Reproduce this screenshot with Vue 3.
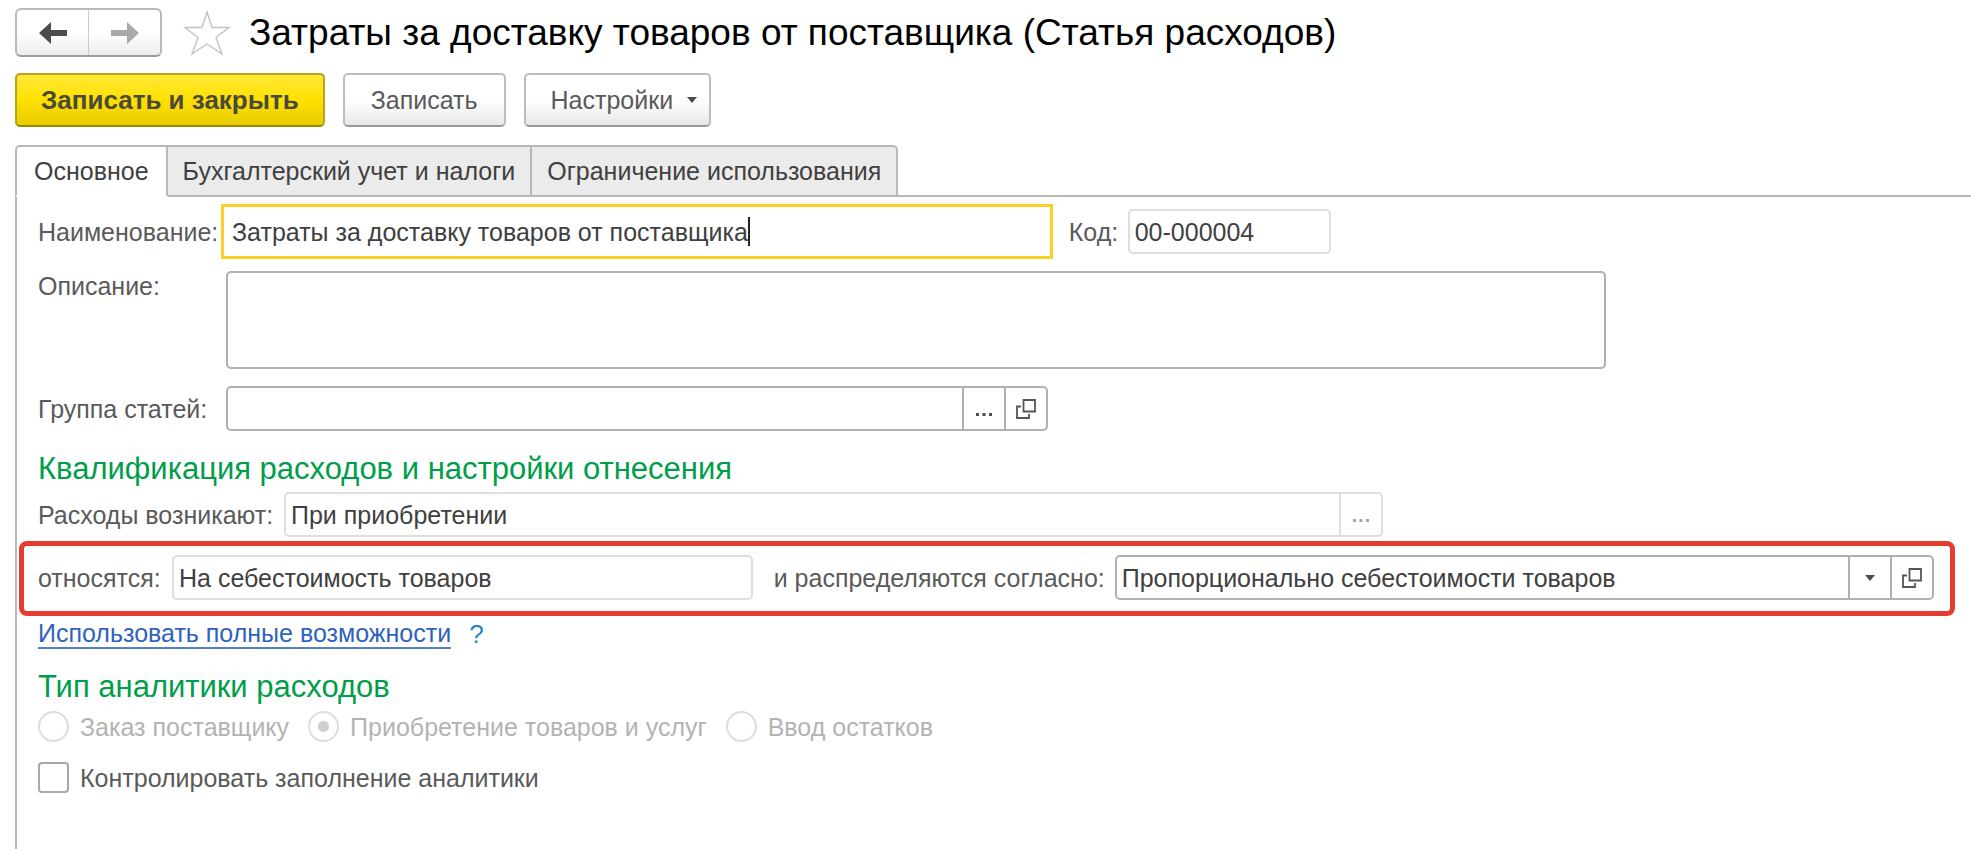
<template>
  <div class="page">
    <header class="header">
      <div class="nav">
        <button type="button" aria-label="Назад">
          <svg width="28" height="22" viewBox="0 0 28 22">
            <path d="M0 11 L12 0 V8 H28 V14 H12 V22 Z" fill="#4d4d4d" />
          </svg>
        </button>
        <button type="button" aria-label="Вперед">
          <svg width="28" height="22" viewBox="0 0 28 22">
            <path d="M28 11 L16 0 V8 H0 V14 H16 V22 Z" fill="#a9a9a9" />
          </svg>
        </button>
      </div>
      <button type="button" class="star" aria-label="В избранное">
        <svg width="48" height="46" viewBox="0 0 48 46">
          <path
            d="M24 2 L29 17.5 H46 L33 27.5 L39 44 L24 34 L9 44 L15 27.5 L2 17.5 H19 Z"
            fill="none"
            stroke="#bcc4cb"
            stroke-width="1.4"
          />
        </svg>
      </button>
      <h1>Затраты за доставку товаров от поставщика (Статья расходов)</h1>
    </header>

    <div class="commands">
      <button type="button" class="btn primary">Записать и закрыть</button>
      <button type="button" class="btn">Записать</button>
      <button type="button" class="btn menu">
        Настройки
        <svg width="10" height="6" viewBox="0 0 10 6">
          <path d="M0 0 H10 L5 6 Z" fill="#4d4d4d" />
        </svg>
      </button>
    </div>

    <div class="tabs" role="tablist">
      <button
        v-for="(tab, index) in tabs"
        :key="tab"
        type="button"
        role="tab"
        class="tab"
        :class="{ active: activeTab === index }"
        :aria-selected="activeTab === index"
        @click="activeTab = index"
      >
        {{ tab }}
      </button>
      <div class="tabs-line"></div>
    </div>

    <main class="panel">
      <div class="row row-name">
        <label for="name">Наименование:</label>
        <div class="field focused">
          <input id="name" v-model="form.name" type="text" />
          <span class="caret"></span>
        </div>
        <label for="code" class="label-code">Код:</label>
        <div class="field readonly field-code">
          <input id="code" v-model="form.code" type="text" readonly />
        </div>
      </div>

      <div class="row row-description">
        <label for="description">Описание:</label>
        <textarea id="description" v-model="form.description"></textarea>
      </div>

      <div class="row row-group">
        <label for="group">Группа статей:</label>
        <div class="field field-group">
          <input id="group" v-model="form.group" type="text" />
          <button type="button" class="field-btn" aria-label="Выбрать">
            <svg width="18" height="16" viewBox="0 0 18 16">
              <path d="M1 12h3v3h-3z M7.5 12h3v3h-3z M14 12h3v3h-3z" fill="#4d4d4d" />
            </svg>
          </button>
          <button type="button" class="field-btn" aria-label="Открыть">
            <svg width="20" height="20" viewBox="0 0 20 20">
              <path
                d="M7.5 1 H19 V12.5 H7.5 Z M5 7.5 H1 V19 H13 V15"
                fill="none"
                stroke="#555"
                stroke-width="1.8"
              />
            </svg>
          </button>
        </div>
      </div>

      <h2 class="heading-qualification">Квалификация расходов и настройки отнесения</h2>

      <div class="row row-origin">
        <label for="origin">Расходы возникают:</label>
        <div class="field readonly field-origin">
          <input id="origin" v-model="form.origin" type="text" readonly />
          <button type="button" class="field-btn" aria-label="Выбрать" disabled>
            <svg width="18" height="16" viewBox="0 0 18 16">
              <path d="M1 12h3v3h-3z M7.5 12h3v3h-3z M14 12h3v3h-3z" fill="#a6a6a6" />
            </svg>
          </button>
        </div>
      </div>

      <div class="row highlight">
        <label for="target">относятся:</label>
        <div class="field readonly field-target">
          <input id="target" v-model="form.target" type="text" readonly />
        </div>
        <label for="rule" class="label-rule">и распределяются согласно:</label>
        <div class="field field-rule">
          <div class="select">
            <select id="rule" v-model="form.rule">
              <option>Пропорционально себестоимости товаров</option>
            </select>
            <span class="select-arrow">
              <svg width="10" height="6" viewBox="0 0 10 6">
                <path d="M0 0 H10 L5 6 Z" fill="#4d4d4d" />
              </svg>
            </span>
          </div>
          <button type="button" class="field-btn" aria-label="Открыть">
            <svg width="20" height="20" viewBox="0 0 20 20">
              <path
                d="M7.5 1 H19 V12.5 H7.5 Z M5 7.5 H1 V19 H13 V15"
                fill="none"
                stroke="#555"
                stroke-width="1.8"
              />
            </svg>
          </button>
        </div>
      </div>

      <div class="row row-link">
        <a href="#">Использовать полные возможности</a>
        <button type="button" class="help">?</button>
      </div>

      <h2 class="heading-type">Тип аналитики расходов</h2>

      <div class="row row-radios">
        <label v-for="item in analytics" :key="item" class="option disabled">
          <input v-model="form.analytics" type="radio" name="analytics" :value="item" disabled />
          {{ item }}
        </label>
      </div>

      <div class="row row-check">
        <label class="option">
          <input v-model="form.control" type="checkbox" />
          Контролировать заполнение аналитики
        </label>
      </div>
    </main>
  </div>
</template>

<script setup>
import { reactive, ref } from "vue";

const tabs = ["Основное", "Бухгалтерский учет и налоги", "Ограничение использования"];
const activeTab = ref(0);

const analytics = ["Заказ поставщику", "Приобретение товаров и услуг", "Ввод остатков"];

const form = reactive({
  name: "Затраты за доставку товаров от поставщика",
  code: "00-000004",
  description: "",
  group: "",
  origin: "При приобретении",
  target: "На себестоимость товаров",
  rule: "Пропорционально себестоимости товаров",
  analytics: "Приобретение товаров и услуг",
  control: false,
});
</script>

<style>
html,
body,
#app {
  height: 100%;
}
body {
  background: #fff;
}
</style>

<style scoped>
.page {
  display: flex;
  flex-direction: column;
  min-height: 100%;
  box-sizing: border-box;
  padding: 8px 0 0 15px;
  font-family: "Liberation Sans", Arial, sans-serif;
  font-size: 25px;
  line-height: 30px;
  color: #404040;
}
button,
input,
select,
textarea {
  box-sizing: border-box;
  margin: 0;
  padding: 0;
  border: none;
  background: none;
  outline: none;
  font: inherit;
  color: inherit;
}
svg {
  display: block;
}

.header {
  display: flex;
  align-items: center;
  height: 49px;
}
.nav {
  display: flex;
  box-sizing: border-box;
  width: 147px;
  height: 49px;
  border: 2px solid #b9b9b9;
  border-bottom-color: #9c9c9c;
  border-radius: 6px;
  background: linear-gradient(#fff 50%, #ececec);
}
.nav button {
  display: flex;
  flex: 1;
  align-items: center;
  justify-content: center;
}
.nav button + button {
  border-left: 1px solid #ccc;
}
.star {
  margin-left: 21px;
}
h1 {
  margin: 0 0 0 18px;
  font-size: 37px;
  font-weight: normal;
  line-height: 42px;
  white-space: nowrap;
  color: #000;
}

.commands {
  display: flex;
  gap: 18px;
  margin-top: 16px;
}
.btn {
  display: flex;
  align-items: center;
  height: 54px;
  padding: 0 26px;
  border: 2px solid #bdbdbd;
  border-bottom-color: #999;
  border-radius: 5px;
  background: linear-gradient(#fff 50%, #e8e8e8);
  color: #5a5a5a;
}
.btn.primary {
  padding: 0 24px;
  border-color: #b9a31a;
  border-bottom-color: #9a8600;
  background: linear-gradient(#ffe838, #ffe100 50%, #e8cb00);
  font-size: 26px;
  font-weight: bold;
  color: #4a4a3a;
}
.btn.menu {
  gap: 14px;
  padding: 0 12px 0 25px;
}

.tabs {
  display: flex;
  margin-top: 18px;
}
.tab {
  height: 52px;
  padding: 0 15px;
  border: 2px solid #b8b8b8;
  border-left-width: 0;
  background: #ebebeb;
  white-space: nowrap;
}
.tab:first-child {
  padding: 0 17px;
  border-left-width: 2px;
  border-top-left-radius: 5px;
}
.tab:nth-child(3) {
  border-top-right-radius: 5px;
}
.tab.active {
  border-bottom-color: #fff;
  background: #fff;
}
.tabs-line {
  flex: 1;
  border-bottom: 2px solid #b8b8b8;
}

.panel {
  flex: 1;
  border-left: 2px solid #b8b8b8;
}
.row {
  display: flex;
  align-items: center;
  padding: 0 21px;
}
.row > label {
  flex: none;
  white-space: nowrap;
  color: #5a5a5a;
}
.field {
  display: flex;
  box-sizing: border-box;
  height: 45px;
  border: 2px solid #b0b0b0;
  border-radius: 5px;
  background: #fff;
}
.field > input {
  flex: 1;
  min-width: 0;
  padding: 0 5px;
}
.field.readonly {
  border-color: #dedede;
}
.field-btn {
  display: flex;
  flex: none;
  align-items: center;
  justify-content: center;
  width: 42px;
  border-left: 2px solid #b0b0b0;
}
.readonly .field-btn {
  border-color: #dedede;
}

.row-name {
  margin-top: 7px;
}
.row-name > label:first-child {
  width: 183px;
}
.field.focused {
  align-items: center;
  width: 43.5%;
  height: 55px;
  padding-left: 8px;
  border: 3px solid #fbcf23;
  border-radius: 0;
}
.field.focused > input {
  flex: none;
  max-width: 100%;
  padding: 0;
  field-sizing: content;
}
.caret {
  flex: none;
  width: 2px;
  height: 29px;
  background: #222;
}
.row > .label-code {
  width: 59px;
  margin-left: 16px;
}
.field-code {
  width: 203px;
}

.row-description {
  align-items: flex-start;
  margin-top: 12px;
}
.row-description label,
.row-group label {
  width: 188px;
}
textarea {
  width: 72.2%;
  height: 98px;
  padding: 6px;
  border: 2px solid #b0b0b0;
  border-radius: 5px;
  resize: none;
}
.row-group {
  margin-top: 17px;
}
.field-group {
  width: 43%;
}

h2 {
  margin: 0 21px;
  font-size: 31px;
  font-weight: normal;
  line-height: 36px;
  color: #009e49;
}
.heading-qualification {
  margin-top: 20px;
}
.row-origin {
  margin-top: 5px;
}
.row-origin label {
  width: 246px;
}
.field-origin {
  width: 57.5%;
}

.highlight {
  margin: 4px 16px 0 2px;
  padding: 9px 16px 11px 14px;
  border: 5px solid #e63b30;
  border-radius: 8px;
}
.highlight label:first-child {
  width: 134px;
}
.field-target {
  flex: 29;
}
.row > .label-rule {
  width: 341px;
  margin-left: 21px;
}
.field-rule {
  flex: 41;
}
.select {
  display: grid;
  flex: 1;
  grid-template-columns: 1fr 42px;
}
.select select {
  grid-area: 1 / 1 / 2 / 3;
  padding: 0 5px;
  appearance: none;
}
.select-arrow {
  display: flex;
  grid-area: 1 / 2 / 2 / 3;
  align-items: center;
  justify-content: center;
  border-left: 2px solid #b0b0b0;
  pointer-events: none;
}

.row-link {
  gap: 18px;
  margin-top: 3px;
}
a {
  border-bottom: 2px solid #5580c8;
  line-height: 28px;
  text-decoration: none;
  color: #2f62bd;
}
.help {
  font-size: 26px;
  color: #1f87c9;
}
.heading-type {
  margin-top: 20px;
}

.row-radios {
  gap: 19px;
  margin-top: 6px;
}
.row-check {
  margin-top: 20px;
}
.option {
  display: flex;
  gap: 11px;
  align-items: center;
}
.row > .option.disabled {
  color: #b3b3b3;
}
.option input {
  width: 31px;
  height: 31px;
  border: 2px solid #a8a8a8;
  border-radius: 4px;
  background: #fff;
  appearance: none;
}
.option input[type="radio"] {
  border-color: #dedede;
  border-radius: 50%;
}
.option input[type="radio"]:checked {
  background: radial-gradient(circle, #cfcfcf 5px, #fff 6px);
}
.option input[type="checkbox"]:checked {
  background: radial-gradient(#4d4d4d 8px, #fff 9px);
}
</style>
